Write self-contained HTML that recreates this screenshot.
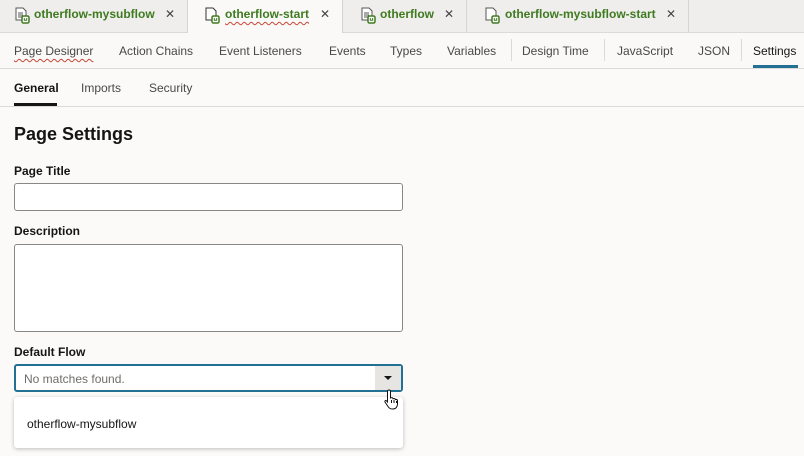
<!DOCTYPE html>
<html><head><style>
*{box-sizing:border-box;margin:0;padding:0}
body{width:804px;height:456px;overflow:hidden;background:#fbfaf9;font-family:"Liberation Sans",sans-serif;color:#161513;position:relative}
.abs{position:absolute}
.tabs{top:0;left:0;width:804px;height:33px;background:#efeeec;border-bottom:1px solid #dcdad7}
.tab{top:0;height:33px;border-right:1px solid #d6d4d1;font-size:12px;font-weight:bold;color:#3f7a20;line-height:29px}
.tab .x{position:absolute;color:#444;font-weight:normal;font-size:12px}
.ic{position:absolute;top:7px;width:16px;height:17px}
.nav{top:33px;left:0;width:804px;height:36px;border-bottom:1px solid #dcdad7;background:#faf9f8;font-size:12px;color:#4a4845}
.nav span{position:absolute;top:11px}
.sep{position:absolute;top:6px;width:1px;height:22px;background:#dcdad7}
.sub{top:69px;left:0;width:804px;height:38px;border-bottom:1px solid #dcdad7;font-size:12px;color:#4a4845}
.sub span{position:absolute;top:12px}
.lbl{font-size:12px;font-weight:bold;color:#161513}
.inp{border:1px solid #8a8886;border-radius:3px;background:#fff}
</style></head><body>
<div class="abs tabs">
  <div class="abs tab" style="left:0;width:188px;">
    <svg class="ic" style="left:14px" viewBox="0 0 16 17"><path d="M2 1h7l3 3v9H2z" fill="#fff" stroke="#555"/><path d="M4 6h5M4 8h5M4 10h4" stroke="#555"/><rect x="8" y="9" width="7" height="7" rx="1.5" fill="#fff" stroke="#3f7a20" stroke-width="1.5"/><path d="M10.3 11v2.3h2.4V11" stroke="#3f7a20" fill="none"/></svg>
    <span class="abs" style="left:34px">otherflow-mysubflow</span><span class="x" style="left:165px">✕</span></div>
  <div class="abs tab" style="left:188px;width:155px;background:#faf9f8;height:34px">
    <svg class="ic" style="left:16px" viewBox="0 0 16 17"><path d="M2 1h7l3 3v9H2z" fill="#fff" stroke="#333"/><rect x="8" y="9" width="7" height="7" rx="1.5" fill="#fff" stroke="#3f7a20" stroke-width="1.5"/><path d="M10.3 11v2.3h2.4V11" stroke="#3f7a20" fill="none"/></svg>
    <span class="abs" style="left:37px;text-decoration:underline wavy #c74634;text-underline-offset:3px;text-decoration-thickness:1px">otherflow-start</span><span class="x" style="left:132px">✕</span></div>
  <div class="abs tab" style="left:343px;width:124px;">
    <svg class="ic" style="left:17px" viewBox="0 0 16 17"><path d="M2 1h7l3 3v9H2z" fill="#fff" stroke="#555"/><path d="M4 6h5M4 8h5M4 10h4" stroke="#555"/><rect x="8" y="9" width="7" height="7" rx="1.5" fill="#fff" stroke="#3f7a20" stroke-width="1.5"/><path d="M10.3 11v2.3h2.4V11" stroke="#3f7a20" fill="none"/></svg>
    <span class="abs" style="left:37px">otherflow</span><span class="x" style="left:101px">✕</span></div>
  <div class="abs tab" style="left:467px;width:222px;">
    <svg class="ic" style="left:17px" viewBox="0 0 16 17"><path d="M2 1h7l3 3v9H2z" fill="#fff" stroke="#555"/><rect x="8" y="9" width="7" height="7" rx="1.5" fill="#fff" stroke="#3f7a20" stroke-width="1.5"/><path d="M10.3 11v2.3h2.4V11" stroke="#3f7a20" fill="none"/></svg>
    <span class="abs" style="left:38px">otherflow-mysubflow-start</span><span class="x" style="left:199px">✕</span></div>
</div>
<div class="abs nav">
  <span style="left:14px;text-decoration:underline wavy #c74634;text-underline-offset:3px;text-decoration-thickness:1px">Page Designer</span>
  <span style="left:119px">Action Chains</span>
  <span style="left:219px">Event Listeners</span>
  <span style="left:329px">Events</span>
  <span style="left:390px">Types</span>
  <span style="left:447px">Variables</span>
  <div class="sep" style="left:511px"></div>
  <span style="left:522px">Design Time</span>
  <div class="sep" style="left:604px"></div>
  <span style="left:617px">JavaScript</span>
  <span style="left:698px">JSON</span>
  <div class="sep" style="left:741px"></div>
  <span style="left:753px;color:#161513">Settings</span>
  <div class="abs" style="left:753px;top:32px;width:45px;height:3px;background:#227093"></div>
</div>
<div class="abs sub">
  <span style="left:14px;color:#161513;font-weight:bold">General</span>
  <div class="abs" style="left:14px;top:34px;width:43px;height:3px;background:#161513"></div>
  <span style="left:81px">Imports</span>
  <span style="left:149px">Security</span>
</div>
<div class="abs" style="left:14px;top:124px;font-size:18px;font-weight:bold">Page Settings</div>
<div class="abs lbl" style="left:14px;top:164px">Page Title</div>
<div class="abs inp" style="left:14px;top:183px;width:389px;height:28px"></div>
<div class="abs lbl" style="left:14px;top:224px">Description</div>
<div class="abs inp" style="left:14px;top:244px;width:389px;height:88px"></div>
<div class="abs lbl" style="left:14px;top:345px">Default Flow</div>
<div class="abs" style="left:14px;top:364px;width:389px;height:28px;border:2px solid #227093;border-radius:3px;background:#fff">
  <span class="abs" style="left:8px;top:6px;font-size:12px;color:#6f6d6a">No matches found.</span>
  <div class="abs" style="right:0;top:0;width:26px;height:24px;background:#e7e5e2"></div>
  <div class="abs" style="right:9px;top:10px;width:0;height:0;border-left:4px solid transparent;border-right:4px solid transparent;border-top:4px solid #161513"></div>
</div>
<div class="abs" style="left:14px;top:397px;width:389px;height:51px;background:#fff;border-radius:3px;box-shadow:0 1px 4px rgba(0,0,0,.25)">
  <span class="abs" style="left:13px;top:20px;font-size:12px;color:#161513">otherflow-mysubflow</span>
</div>
<svg class="abs" style="left:383px;top:388px" width="20" height="24" viewBox="0 0 20 24"><path d="M6 2c1 0 1.5.6 1.5 1.5V10l1-.3c.8-.2 1.5.3 1.5 1l.9-.2c.8-.1 1.4.4 1.4 1l.8-.1c.9 0 1.4.6 1.4 1.4V16c0 2.5-1.5 5-4.5 5H9c-2 0-3-1-4-2.5L2 14c-.5-.8.3-1.8 1.3-1.3L4.5 14V3.5C4.5 2.6 5 2 6 2z" fill="#fff" stroke="#111" stroke-width="1"/><path d="M8.5 12v3M11 12v3M13.5 13v2" stroke="#111"/></svg>
</body></html>
